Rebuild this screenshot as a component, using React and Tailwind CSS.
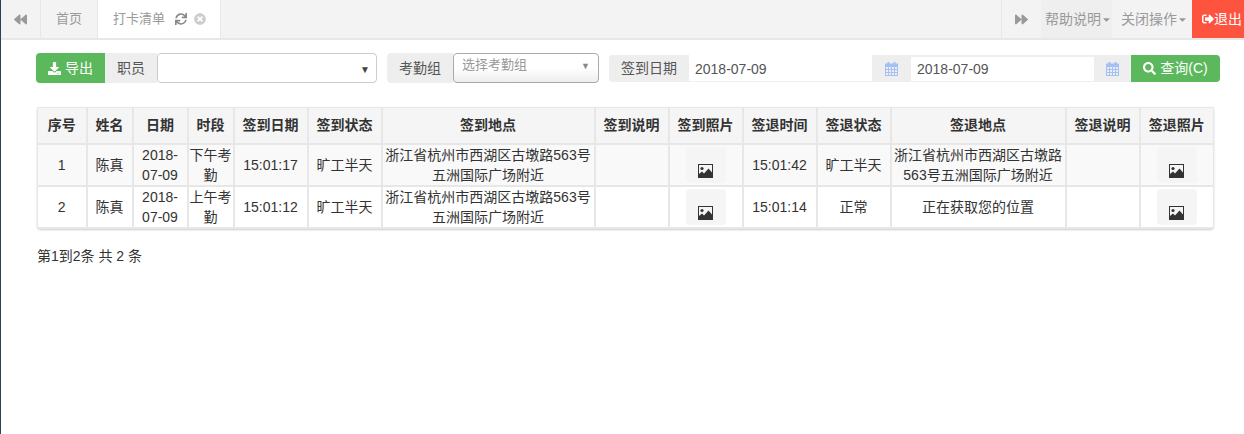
import React from "react";
import { FaBackward, FaForward, FaDownload, FaSearch, FaSync, FaTimesCircle, FaSignOutAlt, FaCaretDown } from "react-icons/fa";

const widths = [49, 46, 55, 46, 74, 74, 213, 74, 74, 74, 74, 175, 74, 74];
const heads = ["序号", "姓名", "日期", "时段", "签到日期", "签到状态", "签到地点", "签到说明", "签到照片", "签退时间", "签退状态", "签退地点", "签退说明", "签退照片"];
const rows = [
  { n: "1", period: "下午考勤", inTime: "15:01:17", outTime: "15:01:42", outState: "旷工半天", outPlace: "浙江省杭州市西湖区古墩路563号五洲国际广场附近", bg: "bg-[#f9f9f9]" },
  { n: "2", period: "上午考勤", inTime: "15:01:12", outTime: "15:01:14", outState: "正常", outPlace: "正在获取您的位置", bg: "bg-white" },
];
const td = "border-2 border-[#e7e7e7] first:border-l last:border-r p-0 text-center align-middle leading-[20px] text-[#333] h-[40px]";

function PictureIcon() {
  return (
    <svg width="15" height="14" viewBox="0 0 15 14">
      <path fillRule="evenodd" fill="#333" d="M0 0H15V14H0ZM1 1V13H14V1Z" />
      <circle cx="4" cy="4.5" r="1.6" fill="#333" />
      <path fill="#333" d="M1 13V10L4 7.5L6 9.5L10.5 4.5L14 8.5V13Z" />
    </svg>
  );
}

function CalendarIcon() {
  return (
    <svg width="13" height="14" viewBox="0 0 13 14" fill="#a4c0f4">
      <rect x="2.5" y="0" width="2" height="3" />
      <rect x="8.5" y="0" width="2" height="3" />
      <rect x="0" y="1.5" width="13" height="3" />
      <path fillRule="evenodd" d="M0 4H13V14H0ZM1 5V7H3V5ZM4 5V7H6V5ZM7 5V7H9V5ZM10 5V7H12V5ZM1 8V10H3V8ZM4 8V10H6V8ZM7 8V10H9V8ZM10 8V10H12V8ZM1 11V13H3V11ZM4 11V13H6V11ZM7 11V13H9V11ZM10 11V13H12V11Z" />
    </svg>
  );
}

function Photo() {
  return (
    <div className="mx-auto flex h-[36px] w-[40px] items-end justify-center rounded bg-[#f5f5f5] pb-[5px]">
      <PictureIcon />
    </div>
  );
}

function Addon({ children, className = "" }) {
  return <div className={`flex items-center justify-center bg-[#eeeeee] text-[#555] ${className}`}>{children}</div>;
}

export default function App() {
  return (
    <div className="h-[434px] w-[1244px] overflow-hidden border-l border-l-[#2f4050] bg-white text-[14px] text-[#333]" style={{ fontFamily: '"Liberation Sans", "Noto Sans CJK SC", sans-serif' }}>
      <div className="flex h-[40px] border-b-2 border-b-[#e7e7e7] bg-[#f3f3f4] text-[#999]">
        <div className="flex w-[40px] items-center justify-center border-r border-r-[#e7e7e7]"><FaBackward className="text-[13px]" /></div>
        <div className="flex w-[57px] items-center justify-center border-r border-r-[#e7e7e7] text-[13px]">首页</div>
        <div className="flex w-[123px] items-center border-r border-r-[#e7e7e7] bg-white pl-[15px] text-[13px]">
          <span>打卡清单</span>
          <FaSync className="ml-[10px] text-[12px] text-[#888]" />
          <FaTimesCircle className="ml-[7px] text-[12px] text-[#ccc]" />
        </div>
        <div className="flex-1" />
        <div className="flex w-[40px] items-center justify-center border-l border-l-[#e7e7e7]"><FaForward className="text-[13px]" /></div>
        <div className="flex w-[71px] items-center whitespace-nowrap bg-[#efefef] pl-[4px] text-[14px]">帮助说明<FaCaretDown className="shrink-0 text-[11px]" /></div>
        <div className="flex w-[80px] items-center whitespace-nowrap pl-[9px] text-[14px]">关闭操作<FaCaretDown className="shrink-0 text-[11px]" /></div>
        <div className="flex w-[52px] items-center justify-end bg-[#fd533f] pr-[2px] text-[14px] text-white"><FaSignOutAlt className="text-[12px]" />退出</div>
      </div>

      <div className="flex items-center pl-[35px] pt-[13px]">
        <div className="flex h-[30px] w-[69px] items-center justify-center gap-[4px] rounded-l bg-[#5cb85c] text-[14px] text-white"><FaDownload className="text-[13px]" />导出</div>
        <Addon className="h-[30px] w-[52px]">职员</Addon>
        <div className="relative h-[30px] w-[220px] rounded border border-[#cccccc] bg-white">
          <span className="absolute right-[6px] top-[8px] text-[10px] text-[#444]">▼</span>
        </div>
        <div className="ml-[10px] flex h-[30px] items-stretch">
          <Addon className="w-[66px] rounded-l">考勤组</Addon>
          <div className="relative w-[146px] rounded border border-[#aaaaaa] bg-[linear-gradient(#ffffff_50%,#eeeeee)] pl-[8px] pt-[2px] text-[13px] leading-[18px] text-[#999]">
            选择考勤组
            <span className="absolute right-[8px] top-[3px] text-[9px] text-[#888]">▼</span>
          </div>
        </div>
        <div className="ml-[10px] mt-[1px] flex h-[27px] items-stretch rounded-l rounded-r bg-[#eeeeee]">
          <Addon className="w-[80px] rounded-l">签到日期</Addon>
          <div className="flex w-[183px] items-center border-b border-b-[#f0f0f0] bg-white px-[6px] pt-[2px] text-[#555]">2018-07-09</div>
          <Addon className="w-[38px]"><CalendarIcon /></Addon>
          <div className="my-auto ml-[1px] mt-[2px] flex h-[24px] w-[183px] items-center bg-white pl-[6px] text-[#555]">2018-07-09</div>
          <Addon className="w-[37px]"><CalendarIcon /></Addon>
          <div className="flex w-[89px] items-center justify-center gap-[4px] rounded-r bg-[#5cb85c] text-white"><FaSearch className="text-[13px]" />查询(C)</div>
        </div>
      </div>

      <div className="ml-[36px] mt-[24px] w-[1177px] rounded-sm shadow-[0_1px_2px_rgba(0,0,0,0.2)]">
        <table className="w-full table-fixed border-collapse">
          <colgroup>
            {widths.map((w, i) => <col key={i} style={{ width: w }} />)}
          </colgroup>
          <thead>
            <tr>
              {heads.map((h) => (
                <th key={h} className="h-[36px] border-2 border-t border-[#e7e7e7] bg-[#f5f5f5] p-0 text-center align-middle text-[14px] font-bold text-[#333] first:border-l last:border-r">{h}</th>
              ))}
            </tr>
          </thead>
          <tbody>
            {rows.map((r) => (
              <tr key={r.n} className={r.bg}>
                <td className={td}>{r.n}</td>
                <td className={td}>陈真</td>
                <td className={td}>2018-<br />07-09</td>
                <td className={td}>{r.period}</td>
                <td className={td}>{r.inTime}</td>
                <td className={td}>旷工半天</td>
                <td className={td}>浙江省杭州市西湖区古墩路563号五洲国际广场附近</td>
                <td className={td}></td>
                <td className={td}><Photo /></td>
                <td className={td}>{r.outTime}</td>
                <td className={td}>{r.outState}</td>
                <td className={td}>{r.outPlace}</td>
                <td className={td}></td>
                <td className={td}><Photo /></td>
              </tr>
            ))}
          </tbody>
        </table>
      </div>

      <div className="ml-[36px] mt-[17px] text-[14px] leading-[20px] text-[#333]">第1到2条 共 2 条</div>
    </div>
  );
}
